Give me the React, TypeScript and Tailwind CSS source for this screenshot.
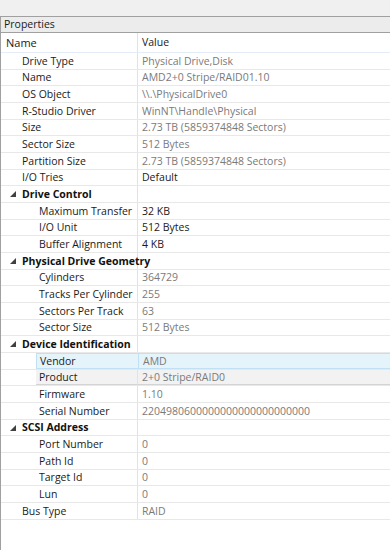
import React from "react";

type Row = {
  name: string;
  value?: string;
  level: 1 | 2;
  group?: boolean;
  dark?: boolean;
  state?: "selected" | "hover";
};

const rows: Row[] = [
  { name: "Drive Type", value: "Physical Drive,Disk", level: 1 },
  { name: "Name", value: "AMD2+0 Stripe/RAID01.10", level: 1 },
  { name: "OS Object", value: "\\\\.\\PhysicalDrive0", level: 1 },
  { name: "R-Studio Driver", value: "WinNT\\Handle\\Physical", level: 1 },
  { name: "Size", value: "2.73 TB (5859374848 Sectors)", level: 1 },
  { name: "Sector Size", value: "512 Bytes", level: 1 },
  { name: "Partition Size", value: "2.73 TB (5859374848 Sectors)", level: 1 },
  { name: "I/O Tries", value: "Default", level: 1, dark: true },
  { name: "Drive Control", level: 1, group: true },
  { name: "Maximum Transfer", value: "32 KB", level: 2, dark: true },
  { name: "I/O Unit", value: "512 Bytes", level: 2, dark: true },
  { name: "Buffer Alignment", value: "4 KB", level: 2, dark: true },
  { name: "Physical Drive Geometry", level: 1, group: true },
  { name: "Cylinders", value: "364729", level: 2 },
  { name: "Tracks Per Cylinder", value: "255", level: 2 },
  { name: "Sectors Per Track", value: "63", level: 2 },
  { name: "Sector Size", value: "512 Bytes", level: 2 },
  { name: "Device Identification", level: 1, group: true },
  { name: "Vendor", value: "AMD", level: 2, state: "selected" },
  { name: "Product", value: "2+0 Stripe/RAID0", level: 2, state: "hover" },
  { name: "Firmware", value: "1.10", level: 2 },
  { name: "Serial Number", value: "2204980600000000000000000000", level: 2 },
  { name: "SCSI Address", level: 1, group: true },
  { name: "Port Number", value: "0", level: 2 },
  { name: "Path Id", value: "0", level: 2 },
  { name: "Target Id", value: "0", level: 2 },
  { name: "Lun", value: "0", level: 2 },
  { name: "Bus Type", value: "RAID", level: 1 },
];

function Expander() {
  return (
    <svg width="6" height="6" viewBox="0 0 6 6" className="shrink-0">
      <polygon points="6,0 6,6 0,6" fill="#404040" />
    </svg>
  );
}

function PropRow({ row }: { row: Row }) {
  const hl =
    row.state === "selected"
      ? "bg-[#e5f3fb] border-y border-[#bfe0f5]"
      : row.state === "hover"
      ? "bg-[#f2f2f2] border-b border-[#d4d4d4]"
      : "";

  if (row.group) {
    return (
      <div className="flex h-[16.68px] border-b border-[#e8e8e8]">
        <div className="w-[137px] shrink-0 flex items-center pl-[9px] gap-[6px] border-r border-[#e2e2e2] font-bold text-[#111] whitespace-nowrap">
          <Expander />
          <span>{row.name}</span>
        </div>
        <div className="flex-1" />
      </div>
    );
  }

  return (
    <div className="flex h-[16.68px] border-b border-[#e8e8e8]">
      <div className={`w-[137px] shrink-0 flex ${row.level === 2 ? "pl-[35px]" : "pl-[18px]"}`}>
        <div
          className={`flex-1 flex items-center pl-[3px] text-[#1a1a1a] whitespace-nowrap ${hl} ${
            row.state === "selected" ? "border-l border-l-[#bfe0f5]" : "border-r border-r-[#e2e2e2]"
          }`}
        >
          {row.name}
        </div>
      </div>
      <div
        className={`flex-1 flex items-center pl-[4px] whitespace-nowrap overflow-hidden ${
          row.dark ? "text-[#1a1a1a]" : "text-[#7a7a7a]"
        } ${hl} ${row.state === "selected" ? "border-l border-l-[#bfe0f5]" : ""}`}
      >
        {row.value}
      </div>
    </div>
  );
}

export default function App() {
  return (
    <div
      className="w-[390px] h-[550px] bg-[#f0f0f0] pt-[16px] overflow-hidden text-[10.5px] leading-none"
      style={{ fontFamily: '"Segoe UI", "Open Sans", "Noto Sans", sans-serif' }}
    >
      <div className="h-[534px] border-t border-l border-[#a0a0a0] bg-white flex flex-col">
        <div className="h-[16px] bg-[#ececec] border-b border-[#a0a0a0] flex items-center pl-[3px] text-[#1a1a1a]">
          Properties
        </div>
        <div className="h-[20px] flex border-b border-[#e3ecf7] text-[#1a1a1a]">
          <div className="w-[137px] shrink-0 flex items-center pl-[5px] border-r border-[#e2e2e2] text-[11px]">
            Name
          </div>
          <div className="flex-1 flex items-center pl-[4px]">Value</div>
        </div>
        <div className="flex-1 flex flex-col">
          {rows.map((r, i) => (
            <PropRow key={i} row={r} />
          ))}
        </div>
      </div>
    </div>
  );
}
